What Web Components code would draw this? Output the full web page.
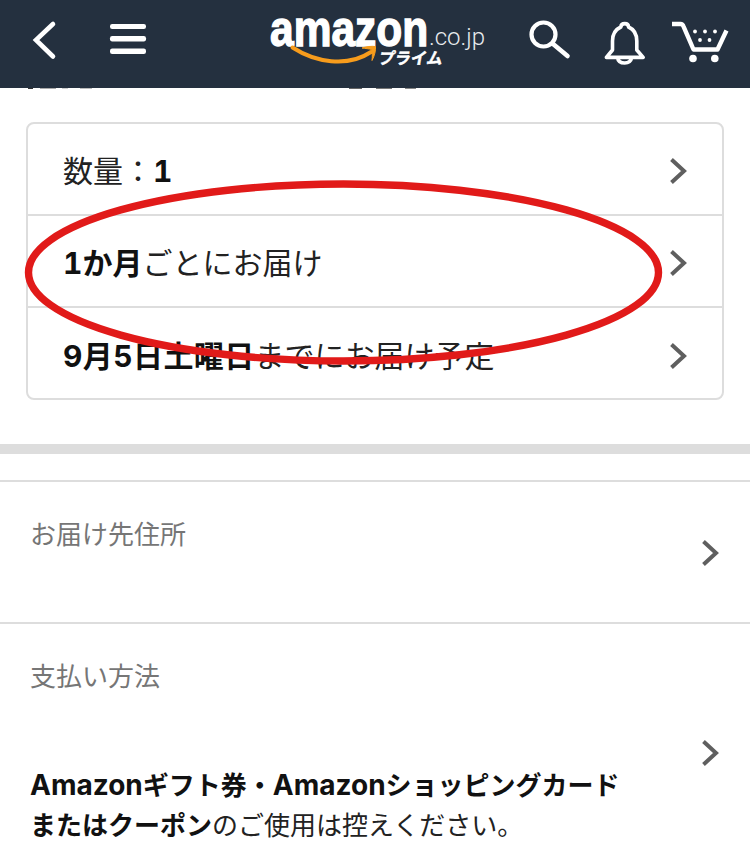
<!DOCTYPE html>
<html lang="ja">
<head>
<meta charset="utf-8">
<title>Amazon</title>
<style>
html,body{margin:0;padding:0;background:#fff;height:847px;overflow:hidden}
body{font-family:Inter,"Noto Sans CJK JP","Liberation Sans",sans-serif;color:#111;position:relative}
.lat{font-size:28px}
.wide{letter-spacing:.4px}
</style>
</head>
<body>
<app-shell>
  <app-header></app-header>
  <cut-text></cut-text>
  <option-card>
    <option-row>数量：<b>1</b></option-row>
    <option-row><b>1か月</b>ごとにお届け</option-row>
    <option-row><b class="wide">9月5日土曜日</b>までにお届け予定</option-row>
  </option-card>
  <section-gap></section-gap>
  <info-section label="お届け先住所"></info-section>
  <info-section label="支払い方法" gap><b><span class="lat">Amazon</span>ギフト券・<span class="lat">Amazon</span>ショッピングカード</b><br><b>またはクーポン</b>のご使用は控えください。</info-section>
  <red-ellipse></red-ellipse>
</app-shell>
<script>
const chevron = `<svg width="18" height="28" viewBox="0 0 18 28" aria-hidden="true"><path d="M2.5 2.5 L15 14 L2.5 25.5" fill="none" stroke="#5f5f5f" stroke-width="4"/></svg>`;
function def(name, html){
  customElements.define(name, class extends HTMLElement{
    connectedCallback(){
      if(this.shadowRoot) return;
      const r=this.attachShadow({mode:"open"});
      r.innerHTML = typeof html==="function"? html(this):html;
    }
  });
}
def("app-shell",`<style>:host{display:block;position:relative;width:750px;height:847px;overflow:hidden}</style><slot></slot>`);
def("app-header",`<style>
:host{display:flex;align-items:flex-start;height:88px;background:#24303f;box-sizing:border-box}
svg{display:block;flex:none}
</style>
<svg width="750" height="88" viewBox="0 0 750 88" role="img" aria-label="amazon.co.jp プライム">
  <path d="M53 24 L36 40 L53 56.5" fill="none" stroke="#fff" stroke-width="4.6" stroke-linecap="round" stroke-linejoin="miter"/>
  <g fill="#fff"><rect x="110" y="24" width="36" height="5" rx="2.2"/><rect x="110" y="36" width="36" height="5.4" rx="2.2"/><rect x="110" y="48.5" width="36" height="5.4" rx="2.2"/></g>
  <text transform="translate(270 45.5) scale(.85 1)" font-size="50" font-weight="700" fill="#fff" stroke="#fff" stroke-width="1.4" font-family="Liberation Sans, sans-serif">amazon</text>
  <text x="429" y="45" font-size="24" fill="#e9ebee" font-family="Roboto, sans-serif" font-weight="300">.co.jp</text>
  <text transform="translate(378 64) skewX(-10)" font-size="16" font-weight="700" fill="#fff" stroke="#fff" stroke-width=".5" font-family="Noto Sans CJK JP, sans-serif">プライム</text>
  <path d="M292.5 47.5 C315 62 347 68 371 52" fill="none" stroke="#f79c1c" stroke-width="4" stroke-linecap="round"/>
  <path d="M362 48 C366 46.5 372 46 375.5 46.5 C376 50 374.5 56 372 60.5 C372.5 56 372.5 52 371.5 49.5 C369 48.8 365.5 48.5 362 48 Z" fill="#f79c1c" stroke="#f79c1c" stroke-width="1"/>
  <circle cx="543.5" cy="34.5" r="12" fill="none" stroke="#fff" stroke-width="4.2"/>
  <path d="M552.5 43.5 L567.5 56" fill="none" stroke="#fff" stroke-width="4.6" stroke-linecap="round"/>
  <path d="M612.5 50 V41 C612.5 33.5 616.5 29 620.8 27 C621 24.6 622.8 23.6 624.8 23.6 C626.8 23.6 628.4 24.6 628.6 27 C633 29 636.8 33.5 636.8 41 V50 L643.2 57.4 H606.4 Z M617.5 57.4 C618 61 621 63 624.7 63 C628.4 63 631 61 631.8 57.4" fill="none" stroke="#fff" stroke-width="3.6" stroke-linejoin="round"/>
  <path d="M672 24 H680.5 C682.5 24 683 25 683.6 26.6 L693.5 49.5 H717.5 L726.5 30.5" fill="none" stroke="#fff" stroke-width="4.4" stroke-linejoin="round"/>
  <g fill="#fff"><circle cx="693" cy="58.5" r="3.8"/><circle cx="714.8" cy="58.5" r="3.8"/><circle cx="695" cy="31.5" r="1.9"/><circle cx="705" cy="31.5" r="1.9"/><circle cx="715" cy="31.5" r="1.9"/><circle cx="700" cy="40" r="1.9"/><circle cx="709.5" cy="40" r="1.9"/></g>
</svg>`);
def("cut-text",`<style>:host{display:block;height:2px;background:
 linear-gradient(90deg,#fff 28px,#333 28px,#333 33px,#fff 33px,#fff 40px,#aaa 40px,#aaa 56px,#fff 56px,#fff 62px,#ccc 62px,#ccc 68px,#fff 68px,#fff 80px,#bbb 80px,#bbb 92px,#fff 92px,#fff 349px,#666 349px,#666 362px,#fff 362px,#fff 376px,#777 376px,#777 392px,#fff 392px,#fff 405px,#888 405px,#888 416px,#fff 416px) 0 0/100% 1px no-repeat}</style>`);
def("option-card",`<style>:host{display:block;box-sizing:border-box;margin:32px 26px 0;height:278px;border:2px solid #ddd;border-radius:8px;overflow:hidden}</style><slot></slot>`);
def("option-row",`<style>
:host{display:flex;align-items:center;justify-content:space-between;box-sizing:border-box;height:92px;padding:0 35px 0 35px;border-bottom:2px solid #ddd;font:400 30px/40px Inter,"Noto Sans CJK JP","Liberation Sans",sans-serif;font-feature-settings:"tnum";color:#222}
:host(:last-child){border-bottom:0}
::slotted(b){font-weight:700;color:#111}
span{padding-top:3px}
svg{display:block;flex:none;margin-top:3px}
</style><span><slot></slot></span>${chevron}`);
def("section-gap",`<style>:host{display:block;height:10px;margin:44px 0 26px;background:#ddd}</style>`);
def("info-section",el=>`<style>
:host{display:flex;align-items:center;justify-content:space-between;box-sizing:border-box;min-height:142px;padding:35px 31px 34px 30px;border-top:2px solid #ddd;font:400 26px/40px Inter,"Noto Sans CJK JP","Liberation Sans",sans-serif;color:#222}
.label{font-size:26px;line-height:36px;color:#767676}
.body{margin-top:70px}
.body.empty{display:none}
.main{align-self:flex-start}
::slotted(b){font-weight:700;color:#111}
svg{display:block;flex:none}
</style><div class="main"><div class="label">${el.getAttribute("label")}</div><div class="body ${el.hasAttribute("gap")?"":"empty"}"><slot></slot></div></div>${chevron}`);
def("red-ellipse",`<style>:host{position:absolute;left:0;top:0;width:750px;height:847px;pointer-events:none;display:block}svg{display:block}</style>
<svg width="750" height="847" viewBox="0 0 750 847" aria-hidden="true"><ellipse cx="343.5" cy="272.5" rx="315" ry="88.5" fill="none" stroke="#e11a19" stroke-width="7.4"/></svg>`);
</script>
</body>
</html>
